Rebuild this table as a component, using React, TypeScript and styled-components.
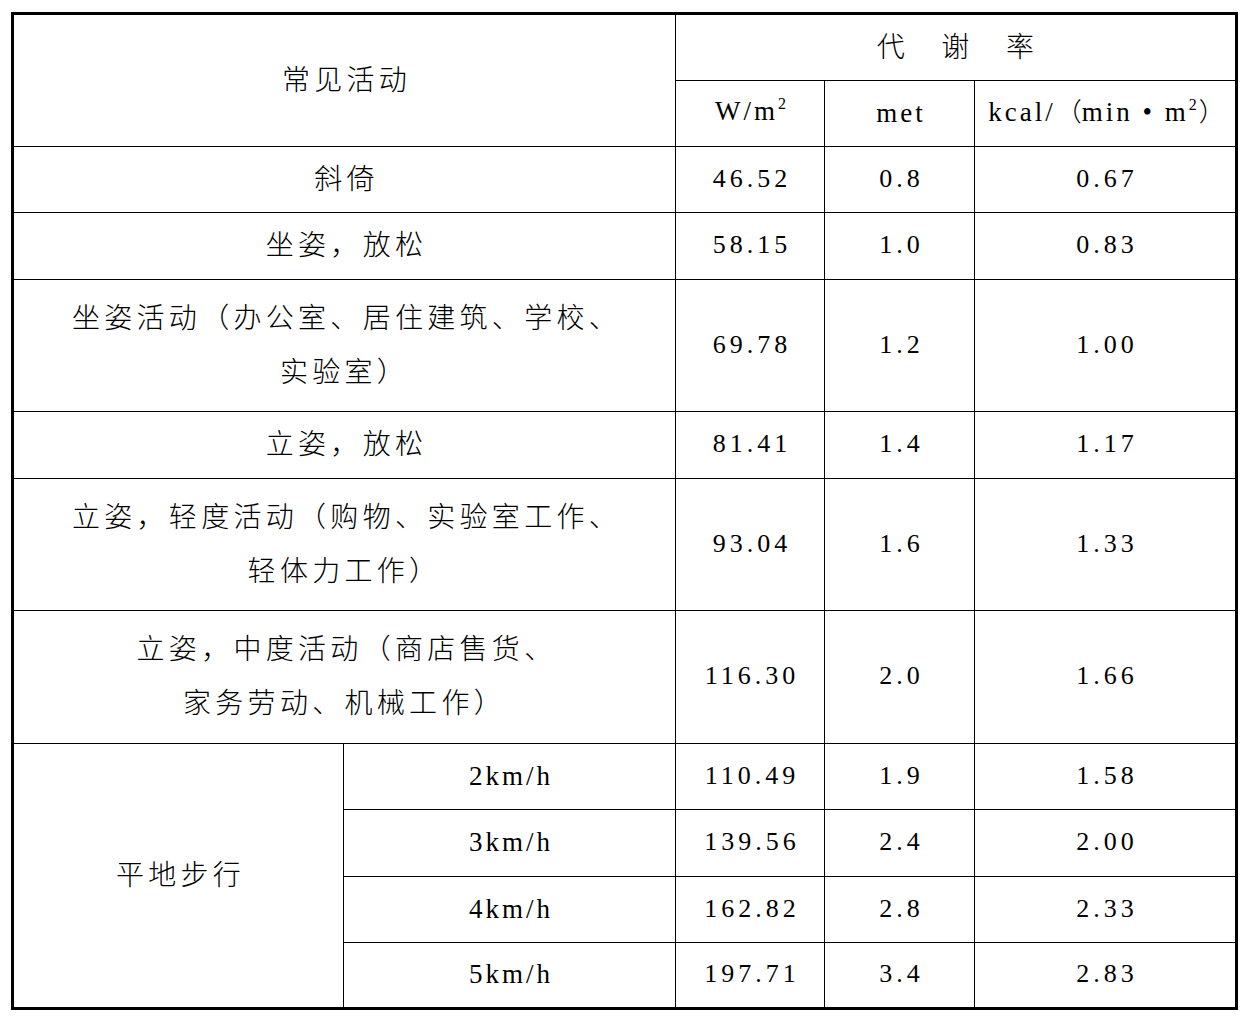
import React from "react";
import styled, { createGlobalStyle } from "styled-components";

const GlobalStyle = createGlobalStyle`
  html, body {
    margin: 0;
    padding: 0;
    background: #ffffff;
  }
  body {
    font-family: "Liberation Serif", "Times New Roman", "Noto Sans CJK SC", serif;
    color: #000;
  }
`;

const Page = styled.div`
  padding: 12px 0 0 11px;
  width: 1247px;
  height: 1020px;
  box-sizing: border-box;
  background: #fff;
`;

const Table = styled.table`
  border-collapse: collapse;
  table-layout: fixed;
  width: 1224px;
  border: 3px solid #000;
`;

const Row = styled.tr<{ $h: number }>`
  height: ${(p) => p.$h}px;
`;

const Cell = styled.td`
  border: 1px solid #000;
  padding: 0;
  text-align: center;
  vertical-align: middle;
`;

const TextCell = styled(Cell)`
  font-family: "Liberation Serif", "Noto Sans CJK SC", serif;
  font-weight: 300;
  font-size: 28px;
  line-height: 54px;
  letter-spacing: 4.3px;
  text-indent: 4px;
`;

const NumCell = styled(Cell)`
  font-family: "Liberation Serif", "Times New Roman", serif;
  font-size: 26px;
  letter-spacing: 4px;
  text-indent: 4px;
  line-height: 30px;
  padding-bottom: 2px;
`;

const UnitCell = styled(Cell)`
  font-family: "Liberation Serif", "Times New Roman", "Noto Sans CJK SC", serif;
  font-size: 27px;
  letter-spacing: 3px;
  text-indent: 3px;
  line-height: 30px;
  padding-bottom: 2px;
`;

const Sup = styled.span`
  font-size: 16px;
  position: relative;
  top: -11px;
  letter-spacing: 2px;
`;

const Paren = styled.span`
  font-family: "Noto Sans CJK SC", sans-serif;
  font-weight: 300;
  font-size: 26px;
  letter-spacing: 0;
`;

type Data = {
  label: React.ReactNode;
  h: number;
  w: string;
  met: string;
  kcal: string;
};

const rows: Data[] = [
  { label: "斜倚", h: 66, w: "46.52", met: "0.8", kcal: "0.67" },
  { label: "坐姿，放松", h: 67, w: "58.15", met: "1.0", kcal: "0.83" },
  {
    label: (
      <>
        坐姿活动（办公室、居住建筑、学校、
        <br />
        实验室）
      </>
    ),
    h: 132,
    w: "69.78",
    met: "1.2",
    kcal: "1.00",
  },
  { label: "立姿，放松", h: 67, w: "81.41", met: "1.4", kcal: "1.17" },
  {
    label: (
      <>
        立姿，轻度活动（购物、实验室工作、
        <br />
        轻体力工作）
      </>
    ),
    h: 132,
    w: "93.04",
    met: "1.6",
    kcal: "1.33",
  },
  {
    label: (
      <>
        立姿，中度活动（商店售货、
        <br />
        家务劳动、机械工作）
      </>
    ),
    h: 133,
    w: "116.30",
    met: "2.0",
    kcal: "1.66",
  },
];

const walking = [
  { speed: "2km/h", h: 66, w: "110.49", met: "1.9", kcal: "1.58" },
  { speed: "3km/h", h: 67, w: "139.56", met: "2.4", kcal: "2.00" },
  { speed: "4km/h", h: 66, w: "162.82", met: "2.8", kcal: "2.33" },
  { speed: "5km/h", h: 66, w: "197.71", met: "3.4", kcal: "2.83" },
];

export default function App() {
  return (
    <>
      <GlobalStyle />
      <Page>
        <Table>
          <colgroup>
            <col style={{ width: 331 }} />
            <col style={{ width: 332 }} />
            <col style={{ width: 149 }} />
            <col style={{ width: 150 }} />
            <col style={{ width: 262 }} />
          </colgroup>
          <tbody>
            <Row $h={67}>
              <TextCell colSpan={2} rowSpan={2}>
                常见活动
              </TextCell>
              <TextCell colSpan={3}>代　谢　率</TextCell>
            </Row>
            <Row $h={66}>
              <UnitCell>
                W/m<Sup>2</Sup>
              </UnitCell>
              <UnitCell>met</UnitCell>
              <UnitCell>
                kcal/<Paren>（</Paren>min • m<Sup>2</Sup>
                <Paren>）</Paren>
              </UnitCell>
            </Row>
            {rows.map((r, i) => (
              <Row $h={r.h} key={i}>
                <TextCell colSpan={2}>{r.label}</TextCell>
                <NumCell>{r.w}</NumCell>
                <NumCell>{r.met}</NumCell>
                <NumCell>{r.kcal}</NumCell>
              </Row>
            ))}
            {walking.map((r, i) => (
              <Row $h={r.h} key={`w${i}`}>
                {i === 0 && <TextCell rowSpan={4}>平地步行</TextCell>}
                <UnitCell>{r.speed}</UnitCell>
                <NumCell>{r.w}</NumCell>
                <NumCell>{r.met}</NumCell>
                <NumCell>{r.kcal}</NumCell>
              </Row>
            ))}
          </tbody>
        </Table>
      </Page>
    </>
  );
}
